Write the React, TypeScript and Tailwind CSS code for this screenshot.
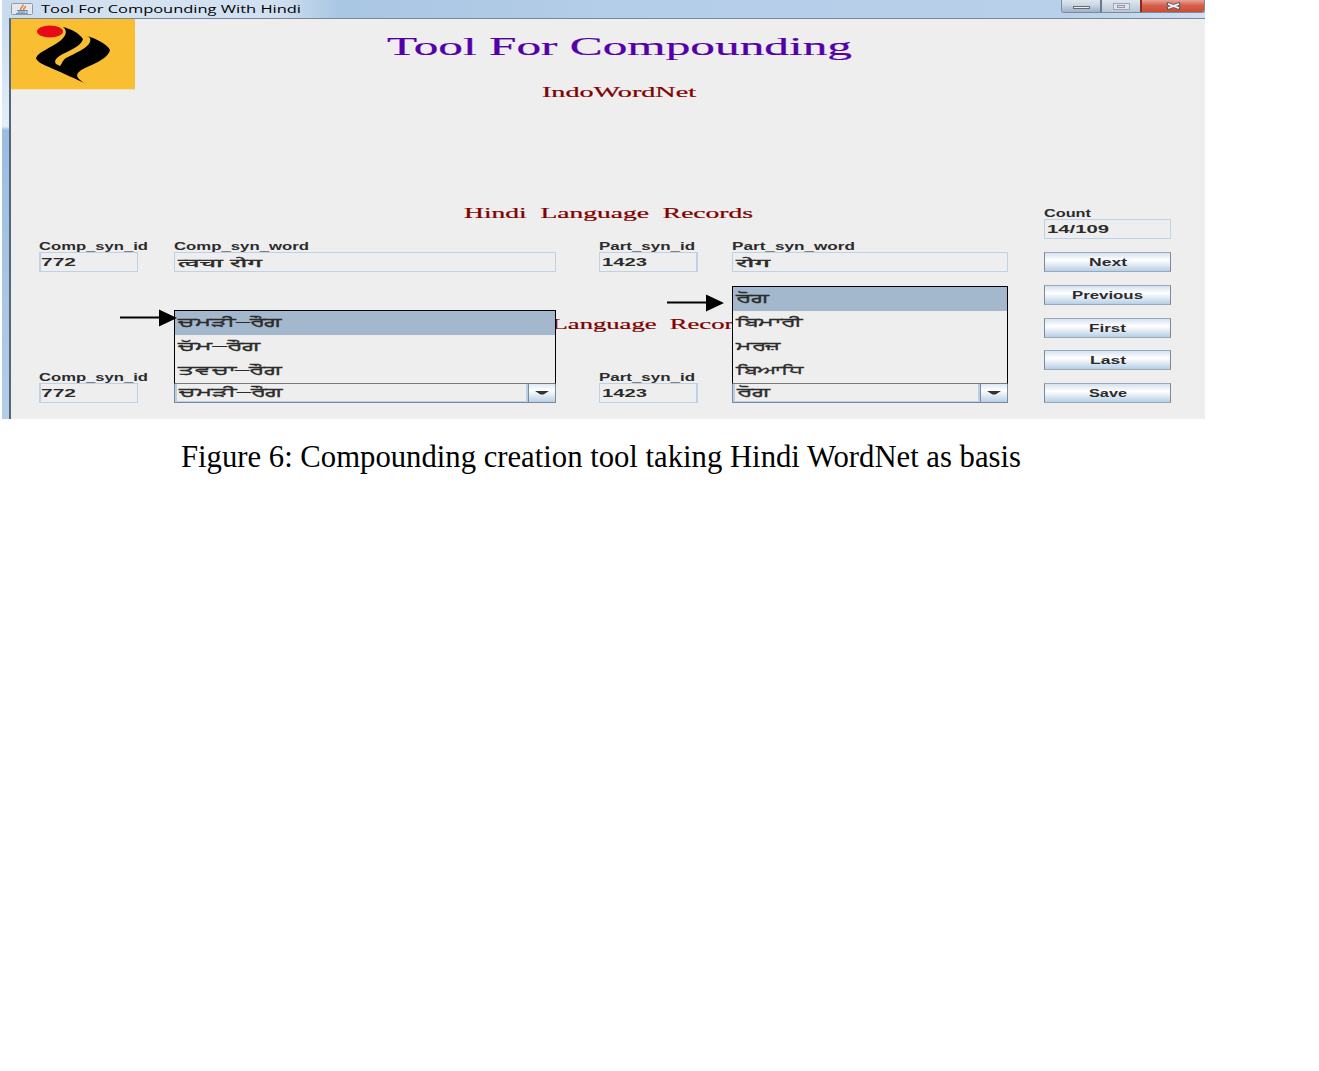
import { useLayoutEffect, useRef, useState, type ReactNode } from "react";

/** Text widened horizontally until it fills the width given by its class. */
function Wide({ className, children }: { className: string; children: ReactNode }) {
  const outer = useRef<HTMLDivElement>(null);
  const inner = useRef<HTMLSpanElement>(null);
  const [scale, setScale] = useState(1);
  useLayoutEffect(() => {
    if (outer.current && inner.current) {
      setScale(outer.current.clientWidth / inner.current.getBoundingClientRect().width);
    }
  }, []);
  return (
    <div ref={outer} className={`shrink-0 whitespace-pre ${className}`}>
      <span ref={inner} className="inline-block origin-left" style={{ transform: `scaleX(${scale})` }}>
        {children}
      </span>
    </div>
  );
}

const sans = "font-['Liberation_Sans','Noto_Sans',sans-serif]";
const serif = "font-['Liberation_Serif',serif]";
const indic = "[-webkit-text-stroke:0.35px_#2b2b2b]";

function Label({ className, children }: { className: string; children: ReactNode }) {
  return <Wide className={`h-3 text-[10px] leading-[14px] font-bold ${className}`}>{children}</Wide>;
}

function Field({ className, textClass, children }: { className: string; textClass: string; children: ReactNode }) {
  return (
    <div className={`h-5 border border-[#bdd2e6] ${className}`}>
      <Wide className={`h-[18px] leading-[20px] ${textClass}`}>{children}</Wide>
    </div>
  );
}

function Combo({ textClass, children }: { textClass: string; children: ReactNode }) {
  return (
    <div className="flex h-5 border border-[#7a8a99]">
      <div className="flex-1 border-x-2 border-b border-[#b8cfe5] pl-[2px]">
        <Wide className={`text-[12px] leading-[17px] ${indic} ${textClass}`}>{children}</Wide>
      </div>
      <div className="flex w-[27px] items-center justify-center border-l border-[#7a8a99] bg-linear-to-b from-[#dde8f3] via-white via-35% to-[#b8cfe5]">
        <svg width="14" height="4" viewBox="0 0 14 4">
          <path d="M0 0H14L8.5 3.5H5.5Z" fill="#333" />
        </svg>
      </div>
    </div>
  );
}

function Popup({ className, items }: { className: string; items: { text: string; w: string }[] }) {
  return (
    <div className={`absolute bottom-[19px] left-0 z-10 flex w-full flex-col border border-black border-b-[#7a7a7a] bg-[#eee] ${className}`}>
      {items.map((item, i) => (
        <div key={item.text} className={`flex-1 pl-[3px] ${i === 0 ? "bg-[#a3b8cc]" : ""}`}>
          <Wide className={`text-[12px] leading-[23px] ${indic} ${item.w}`}>{item.text}</Wide>
        </div>
      ))}
    </div>
  );
}

function Arrow({ className }: { className: string }) {
  return (
    <svg className={`absolute z-20 ${className}`} width="57" height="18" viewBox="0 0 57 18">
      <path d="M0 7.500H39V0.500L57 9L39 17.500V9.500H0Z" fill="#000" />
    </svg>
  );
}

function Button({ w, children }: { w: string; children: ReactNode }) {
  return (
    <button className="flex h-5 w-[127px] justify-center border border-[#7a8a99] border-y-[#98a9ba] bg-linear-to-b from-[#d5e2ef] via-white via-40% to-[#b8cfe5]">
      <Wide className={`h-[18px] text-left text-[10px] leading-[20px] font-bold ${w}`}>{children}</Wide>
    </button>
  );
}

function TitleBar() {
  return (
    <div className="relative flex h-[18px] items-start bg-[linear-gradient(90deg,#c9dbee_0%,#d5e3f1_12%,#cfdff0_23%,#a9c6e2_28%,#b4cde8_50%,#b9d0ea_88%,#d0e0f1_100%)] pl-[9px]">
      <svg className="mt-[3px]" width="22" height="12" viewBox="0 0 22 12">
        <rect x="0.5" y="0.5" width="21" height="11" rx="1" fill="#e5e9ee" stroke="#8d9aaa" />
        <path d="M10.500 7C7.500 5 13 4 12 1.500M13 7C11.500 5.500 15.500 4.500 14 3" stroke="#e87a25" strokeWidth="1.400" fill="none" />
        <path d="M6 7.500H15M7 9H14M5 10.300H17M15 7.500Q18.500 7.500 15 9.200" stroke="#6584a5" strokeWidth="1" fill="none" />
      </svg>
      <Wide className="ml-[8px] h-[18px] w-[260px] font-['Open_Sans',sans-serif] text-[10px] leading-[19px] text-black">
        Tool For Compounding With Hindi
      </Wide>
      <div className="ml-auto flex h-[13px] w-[144px] overflow-hidden rounded-b-[3px] border-x border-b border-[#7b8b9c]">
        <div className="flex w-[40px] items-end justify-center border-r-2 border-[#6b7a8a] bg-linear-to-b from-[#dce6ef] via-[#cbd8e5] via-40% to-[#9fb1c5] pb-[3px]">
          <div className="h-[3px] w-[17px] border border-[#646b73] bg-[#f2eee7]" />
        </div>
        <div className="flex w-[38px] items-center justify-center bg-linear-to-b from-[#dfe8f0] to-[#b8c7d7]">
          <div className="flex h-[7px] w-[17px] items-center justify-center border border-[#a1a8b3] bg-[#dfe3e9]">
            <div className="h-[3px] w-[8px] border border-[#9299a4]" />
          </div>
        </div>
        <div className="flex flex-1 items-center justify-center border-l-2 border-[#8a2a1e] bg-linear-to-b from-[#e8a397] via-[#d4604b] via-45% to-[#cf4a32]">
          <svg width="17" height="8" viewBox="0 0 17 8">
            <path d="M2 1.500L15 6.500M15 1.500L2 6.500" stroke="#4d5664" strokeWidth="3.400" />
            <path d="M3 1.800L14 6.200M14 1.800L3 6.200" stroke="#f3f3f3" strokeWidth="1.800" />
          </svg>
        </div>
      </div>
    </div>
  );
}

function Logo() {
  return (
    <svg width="124" height="71" viewBox="0 0 124 71" className="shrink-0">
      <rect width="124" height="70.300" fill="#f9be32" />
      <path
        d="M52 8C60 10 68 14 72 20C71 25 64 29 56 33C47 37 42 41 45 45L49 47C51 45 51 42 55 39C64 34 76 30 79 23C80 20 79 18 76 17C86 20 96 25 99 31C98 38 86 44 74 49C64 54 63 58 75 65C65 60 54 55 40 49C33 46 26 43 25 39C27 33 40 29 49 22C55 17 57 12 52 8Z"
        fill="#000"
      />
      <ellipse cx="39" cy="12.500" rx="13" ry="6" fill="#e60b16" />
    </svg>
  );
}

const deva = "pl-[3px] text-[11px] [-webkit-text-stroke:0.35px_#2b2b2b]";

export default function App() {
  return (
    <div className={`min-h-[1071px] w-[1319px] bg-white text-[#2b2b2b] ${sans}`}>
      <div className="ml-[2px] h-[419px] w-[1203px] overflow-hidden">
        <TitleBar />
        <div className="flex h-[401px]">
          <div className="w-[7px] bg-[linear-gradient(180deg,#c8dbef_0%,#e3eefa_27%,#9cbce0_28%,#b4cde9_100%)]" />
          <div className="flex flex-1 border-t border-l-2 border-t-[#7688a0] border-l-[#566577] bg-[#eee]">
            <main className="relative w-[997px]">
              <header className="flex h-[91px]">
                <Logo />
                <div className="ml-[252px]">
                  <Wide className={`h-[55px] w-[465px] text-[25px] leading-[56px] text-[#5400a8] [-webkit-text-stroke:0.2px_#5400a8] ${serif}`}>Tool For Compounding</Wide>
                  <Wide className={`mt-[8px] ml-[155px] h-5 w-[154px] text-[14px] leading-[22px] text-[#800000] [-webkit-text-stroke:0.2px_#800000] ${serif}`}>IndoWordNet</Wide>
                </div>
              </header>

              <Wide className={`mt-[93px] ml-[453px] h-5 w-[289px] text-[14px] leading-[22px] text-[#800000] [-webkit-text-stroke:0.2px_#800000] ${serif}`}>
                {"Hindi  Language  Records"}
              </Wide>

              <div className="mt-[17px] ml-[28px] flex">
                <div className="w-[135px]">
                  <Label className="w-[109px]">Comp_syn_id</Label>
                  <Field className="w-[99px] border-l-2" textClass="w-[35px] text-[10px] font-bold">772</Field>
                </div>
                <div className="w-[425px]">
                  <Label className="w-[135px]">Comp_syn_word</Label>
                  <Field className="w-[382px] pl-[3px]" textClass={`w-[84px] text-[11px] ${indic}`}>त्वचा रोग</Field>
                </div>
                <div className="w-[133px]">
                  <Label className="w-[96px]">Part_syn_id</Label>
                  <Field className="w-[99px] border-r-2 pl-[2px]" textClass="w-[45px] text-[10px] font-bold">1423</Field>
                </div>
                <div className="w-[276px]">
                  <Label className="w-[123px]">Part_syn_word</Label>
                  <Field className="w-[276px] pl-[3px]" textClass={`w-[34px] text-[11px] ${indic}`}>रोग</Field>
                </div>
              </div>

              <Wide className={`mt-[42px] ml-[446px] h-5 w-[300px] text-[14px] leading-[22px] text-[#800000] [-webkit-text-stroke:0.2px_#800000] ${serif}`}>
                {"Punjabi  Language  Records"}
              </Wide>

              <div className="mt-[37px] ml-[28px] flex">
                <div className="w-[135px]">
                  <Label className="w-[109px]">Comp_syn_id</Label>
                  <Field className="w-[99px] border-l-2" textClass="w-[35px] text-[10px] font-bold">772</Field>
                </div>
                <div className="relative mr-[43px] w-[382px] pt-3">
                  <Combo textClass="w-[103px]">ਚਮੜੀ–ਰੌਗ</Combo>
                  <Popup
                    className="h-[74px]"
                    items={[
                      { text: "ਚਮੜੀ–ਰੌਗ", w: "w-[103px]" },
                      { text: "ਚੱਮ–ਰੌਗ", w: "w-[81px]" },
                      { text: "ਤਵਚਾ–ਰੌਗ", w: "w-[103px]" },
                    ]}
                  />
                </div>
                <div className="w-[133px]">
                  <Label className="w-[96px]">Part_syn_id</Label>
                  <Field className="w-[99px] border-r-2 pl-[2px]" textClass="w-[45px] text-[10px] font-bold">1423</Field>
                </div>
                <div className="relative w-[276px] pt-3">
                  <Combo textClass="w-[32px]">ਰੋਗ</Combo>
                  <Popup
                    className="h-[98px]"
                    items={[
                      { text: "ਰੋਗ", w: "w-[32px]" },
                      { text: "ਬਿਮਾਰੀ", w: "w-[67px]" },
                      { text: "ਮਰਜ਼", w: "w-[45px]" },
                      { text: "ਬਿਆਧਿ", w: "w-[68px]" },
                    ]}
                  />
                </div>
              </div>

              <Arrow className="top-[290px] left-[109px]" />
              <Arrow className="top-[275px] left-[656px]" />
            </main>

            <aside className="ml-[36px] w-[127px] pt-[188px]">
              <Label className="w-[47px]">Count</Label>
              <Field className="w-[127px] pl-[2px]" textClass="w-[62px] text-[10px] font-bold">14/109</Field>
              <div className="mt-[13px] flex h-[151px] flex-col justify-between">
                <Button w="w-[38px]">Next</Button>
                <Button w="w-[71px]">Previous</Button>
                <Button w="w-[37px]">First</Button>
                <Button w="w-[36px]">Last</Button>
                <Button w="w-[38px]">Save</Button>
              </div>
            </aside>
          </div>
        </div>
      </div>
      <Wide className={`mt-[17px] ml-[181px] h-10 w-[840px] text-[31px] leading-[41px] text-black ${serif}`}>
        Figure 6: Compounding creation tool taking Hindi WordNet as basis
      </Wide>
    </div>
  );
}
